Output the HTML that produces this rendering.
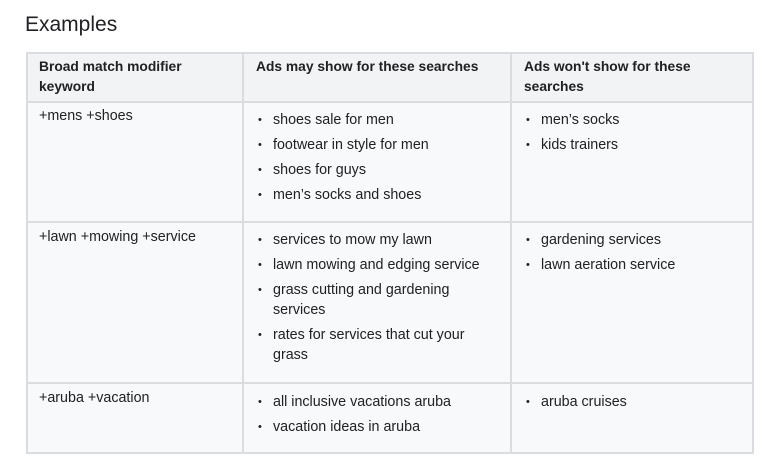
<!DOCTYPE html>
<html><head><style>
body{margin:0;width:778px;height:474px;background:#fff;font-family:"Liberation Sans",sans-serif;color:#202124;position:relative;overflow:hidden}
h1{position:absolute;left:25px;top:11px;margin:0;font-size:21px;font-weight:normal;line-height:28px}
.box{position:absolute;background:#f8f9fa}
.hd{background:#f1f3f4}
.ln{position:absolute;background:#dadce0}
.t{position:absolute;font-size:14.3px;line-height:20px}
.b{font-weight:bold;font-size:13.8px}
ul{margin:0;padding:0;list-style:none}
li{position:relative;padding-left:15px;margin-bottom:5px}
li:before{content:"•";position:absolute;left:0;top:0;font-size:11px}
</style></head><body>
<h1>Examples</h1>
<div class="box hd" style="left:26px;top:52px;width:727px;height:50px"></div>
<div class="box" style="left:26px;top:102px;width:727px;height:351px"></div>
<div class="ln" style="left:26px;top:52px;width:728px;height:2px"></div>
<div class="ln" style="left:26px;top:101px;width:728px;height:2px"></div>
<div class="ln" style="left:26px;top:221px;width:728px;height:2px"></div>
<div class="ln" style="left:26px;top:382px;width:728px;height:2px"></div>
<div class="ln" style="left:26px;top:452px;width:728px;height:2px"></div>
<div class="ln" style="left:26px;top:52px;width:2px;height:402px"></div>
<div class="ln" style="left:242px;top:52px;width:2px;height:402px"></div>
<div class="ln" style="left:510px;top:52px;width:2px;height:402px"></div>
<div class="ln" style="left:752px;top:52px;width:2px;height:402px"></div>

<div class="t b" style="left:39px;top:57px;width:190px">Broad match modifier keyword</div>
<div class="t b" style="left:256px;top:57px">Ads may show for these searches</div>
<div class="t b" style="left:524px;top:57px;width:200px">Ads won't show for these searches</div>

<div class="t" style="left:39px;top:106px">+mens +shoes</div>
<div class="t" style="left:258px;top:110px"><ul><li>shoes sale for men</li><li>footwear in style for men</li><li>shoes for guys</li><li>men’s socks and shoes</li></ul></div>
<div class="t" style="left:526px;top:110px"><ul><li>men’s socks</li><li>kids trainers</li></ul></div>

<div class="t" style="left:39px;top:227px">+lawn +mowing +service</div>
<div class="t" style="left:258px;top:230px;width:235px"><ul><li>services to mow my lawn</li><li>lawn mowing and edging service</li><li>grass cutting and gardening services</li><li>rates for services that cut your grass</li></ul></div>
<div class="t" style="left:526px;top:230px"><ul><li>gardening services</li><li>lawn aeration service</li></ul></div>

<div class="t" style="left:39px;top:388px">+aruba +vacation</div>
<div class="t" style="left:258px;top:392px"><ul><li>all inclusive vacations aruba</li><li>vacation ideas in aruba</li></ul></div>
<div class="t" style="left:526px;top:392px"><ul><li>aruba cruises</li></ul></div>
</body></html>
